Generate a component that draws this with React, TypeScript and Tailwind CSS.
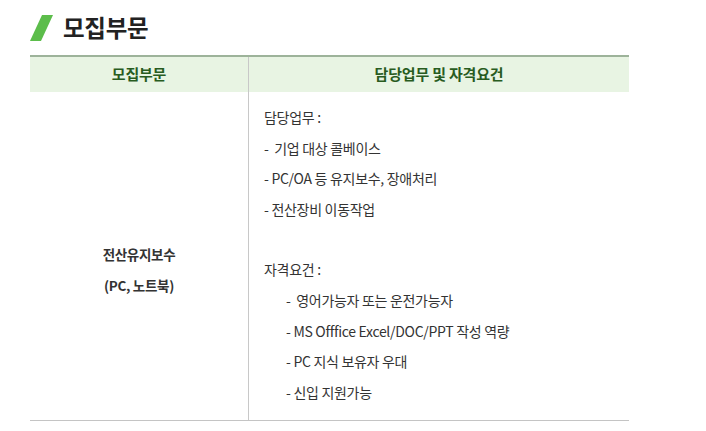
export default function App() {
  const duties = ["-  기업 대상 콜베이스", "- PC/OA 등 유지보수, 장애처리", "- 전산장비 이동작업"];
  const reqs = [
    "-  영어가능자 또는 운전가능자",
    "- MS Offfice Excel/DOC/PPT 작성 역량",
    "- PC 지식 보유자 우대",
    "- 신입 지원가능",
  ];

  return (
    <div
      className="min-h-screen bg-white pl-[30px] pt-[14px]"
      style={{ fontFamily: '"Noto Sans CJK KR", "Noto Sans", sans-serif' }}
    >
      {/* Section title */}
      <div className="flex h-[28px] items-center gap-[9px]">
        <svg width="24" height="26" viewBox="0 0 24 26" className="shrink-0">
          <polygon points="12,0 23,0 11,26 0,26" fill="#5cbd4b" />
        </svg>
        <h1 className="text-[23.5px] font-bold leading-none tracking-[-0.3px] text-[#222]">모집부문</h1>
      </div>

      {/* Table */}
      <div className="mt-[13px] w-[599px] border-t-2 border-b border-t-[#9db39a] border-b-[#c4c4c4]">
        <div className="grid grid-cols-[219px_1fr] bg-[#e8f4e3]">
          <div className="flex h-[35px] items-center justify-center border-r border-[#c8c8c8] text-[15px] font-bold tracking-[-0.2px] text-[#285c1f]">
            모집부문
          </div>
          <div className="flex h-[35px] items-center justify-center text-[15px] font-bold tracking-[-0.2px] text-[#285c1f]">
            담당업무 및 자격요건
          </div>
        </div>

        <div className="grid grid-cols-[219px_1fr]">
          <div className="flex flex-col items-center justify-center border-r border-[#c8c8c8] pt-[28px] text-[13.5px] font-bold leading-[31px] tracking-[-0.3px] text-[#333]">
            <span>전산유지보수</span>
            <span>(PC, 노트북)</span>
          </div>
          <div className="pb-[13px] pl-[15px] pt-[10px] text-[14px] leading-[30.6px] tracking-[-0.3px] text-[#333]">
            <div>담당업무 :</div>
            {duties.map((d) => (
              <div key={d} className="whitespace-pre">
                {d}
              </div>
            ))}
            <div className="h-[30px]" />
            <div>자격요건 :</div>
            <div className="pl-[22px]">
              {reqs.map((r) => (
                <div key={r} className="whitespace-pre">
                  {r}
                </div>
              ))}
            </div>
          </div>
        </div>
      </div>
    </div>
  );
}
